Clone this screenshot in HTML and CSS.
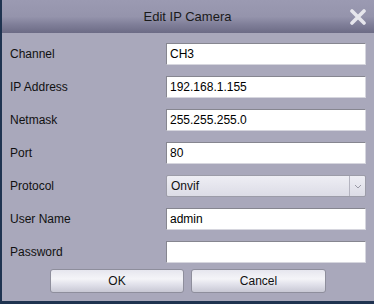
FILE: index.html
```html
<!DOCTYPE html>
<html lang="en">
<head>
    <meta charset="UTF-8" />
    <meta name="viewport" content="width=device-width, initial-scale=1" />
    <title>Edit IP Camera</title>
    <link rel="stylesheet" href="styles.css">
</head>
<body>
    <div class="dialog">
        <div class="title-bar">
            <span class="title">Edit IP Camera</span>
            <button class="close-button" aria-label="Close">
                <svg width="16" height="16" viewBox="0 0 16 16">
                    <path d="M2 2 L14 14 M14 2 L2 14" stroke="#e6e6ec" stroke-width="3.6" stroke-linecap="round" />
                </svg>
            </button>
        </div>
        <div class="dialog-body">
            <div class="form-grid">
                <label class="field-label">Channel</label>
                <input class="text-field" type="text" value="CH3" />
                <label class="field-label">IP Address</label>
                <input class="text-field" type="text" value="192.168.1.155" />
                <label class="field-label">Netmask</label>
                <input class="text-field" type="text" value="255.255.255.0" />
                <label class="field-label">Port</label>
                <input class="text-field" type="text" value="80" />
                <label class="field-label">Protocol</label>
                <div class="select-field">
                    <span class="select-value">Onvif</span>
                    <span class="select-arrow">
                        <svg width="8" height="5" viewBox="0 0 8 5">
                            <path d="M1 1 L4 4 L7 1" fill="none" stroke="#9a9aa6" stroke-width="1" />
                        </svg>
                    </span>
                </div>
                <label class="field-label">User Name</label>
                <input class="text-field" type="text" value="admin" />
                <label class="field-label">Password</label>
                <input class="text-field" type="password" value="" />
            </div>
            <div class="button-row">
                <button class="dialog-button ok-button">OK</button>
                <button class="dialog-button cancel-button">Cancel</button>
            </div>
        </div>
    </div>
</body>
</html>
```

FILE: styles.css
```css
body {
    margin: 0;
    padding: 0;
    font-family: 'Liberation Sans', Arial, sans-serif;
    font-size: 12px;
    color: #111;
    width: 374px;
    height: 304px;
    overflow: hidden;
}
.dialog {
    display: flex;
    flex-direction: column;
    height: 304px;
    box-sizing: border-box;
    border-left: 2px solid #1f3350;
    border-bottom: 3px solid #1f3350;
    background-color: #a9a8bb;
}
.title-bar {
    position: relative;
    height: 33px;
    display: flex;
    align-items: center;
    justify-content: center;
    background: linear-gradient(#9b9ab2 0%, #9594ac 50%, #7f7e98 75%, #6c6b85 100%);
}
.title {
    font-size: 13px;
    color: #1a1a1a;
    margin-left: -1px;
}
.close-button {
    position: absolute;
    right: 7px;
    top: 8px;
    width: 18px;
    height: 18px;
    padding: 0;
    border: none;
    background: none;
    display: flex;
    align-items: center;
    justify-content: center;
}
.dialog-body {
    flex: 1;
    padding: 10px 8px 8px 8px;
    display: flex;
    flex-direction: column;
    gap: 6px;
}
.form-grid {
    display: grid;
    grid-template-columns: 156px 200px;
    grid-auto-rows: 22px;
    row-gap: 11px;
    align-items: center;
}
.field-label {
    font-size: 12px;
    color: #111;
}
.text-field {
    height: 22px;
    width: 200px;
    box-sizing: border-box;
    margin: 0;
    padding: 0 3px;
    border: 1px solid;
    border-color: #868690 #d6d6de #d6d6de #868690;
    background-color: #fff;
    font-family: 'Liberation Sans', Arial, sans-serif;
    font-size: 12px;
    color: #000;
    outline: none;
}
.select-field {
    height: 22px;
    box-sizing: border-box;
    display: flex;
    align-items: stretch;
    border: 1px solid #9c9ca8;
    border-radius: 2px;
    background: linear-gradient(#eeeef4, #dcdce6);
}
.select-value {
    flex: 1;
    display: flex;
    align-items: center;
    padding-left: 4px;
}
.select-arrow {
    width: 15px;
    display: flex;
    align-items: center;
    justify-content: center;
    border-left: 1px solid #b4b4c0;
}
.button-row {
    display: flex;
    gap: 7px;
    padding-left: 40px;
}
.dialog-button {
    height: 24px;
    box-sizing: border-box;
    border: 1px solid #8e8e9c;
    border-radius: 3px;
    background: linear-gradient(#e6e6ee 0%, #f4f4f8 40%, #dedee8 70%, #c8c8d4 100%);
    font-family: 'Liberation Sans', Arial, sans-serif;
    font-size: 12px;
    color: #111;
    padding: 0;
}
.ok-button {
    width: 134px;
}
.cancel-button {
    width: 135px;
}
```
